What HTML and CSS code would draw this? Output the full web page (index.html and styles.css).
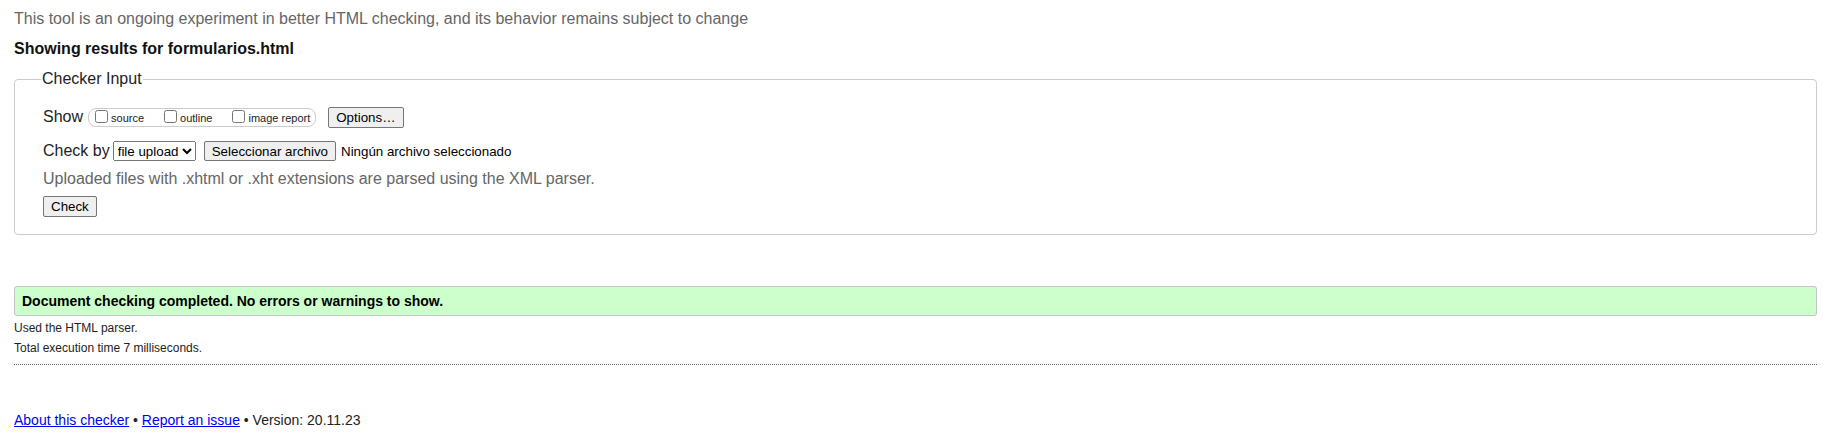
FILE: index.html
```html
<!DOCTYPE html>
<html lang="en">
<head>
<meta charset="utf-8">
<title>Nu Html Checker</title>
<link rel="stylesheet" href="styles.css">
</head>
<body>
<p class="notice">This tool is an ongoing experiment in better HTML checking, and its behavior remains subject to change</p>
<h2 class="results-title">Showing results for formularios.html</h2>
<fieldset class="checker">
  <legend class="checker-legend">Checker Input</legend>
  <div class="checker-body">
    <div class="row">
      <span class="row-label">Show</span>
      <span class="show-group">
        <label class="opt"><input type="checkbox" class="cb"><span class="opt-text">source</span></label>
        <label class="opt"><input type="checkbox" class="cb"><span class="opt-text">outline</span></label>
        <label class="opt opt-last"><input type="checkbox" class="cb"><span class="opt-text">image report</span></label>
      </span>
      <button type="button" class="btn btn-options">Options…</button>
    </div>
    <div class="row row-check">
      <span class="row-label">Check by</span>
      <select class="sel"><option>file upload</option></select>
      <button type="button" class="btn btn-file">Seleccionar archivo</button>
      <span class="file-name">Ningún archivo seleccionado</span>
    </div>
    <p class="hint">Uploaded files with .xhtml or .xht extensions are parsed using the XML parser.</p>
    <div class="row-submit"><button type="button" class="btn">Check</button></div>
  </div>
</fieldset>
<p class="success">Document checking completed. No errors or warnings to show.</p>
<p class="stat stat-first">Used the HTML parser.</p>
<p class="stat">Total execution time 7 milliseconds.</p>
<hr class="divider">
<p class="footer"><a href="#" class="link">About this checker</a> • <a href="#" class="link">Report an issue</a> • Version: 20.11.23</p>
</body>
</html>
```
FILE: styles.css
```css
html, body {
  background: #fff;
}
body {
  margin: 0;
  padding: 0 14px;
  font-family: "Liberation Sans", Arial, sans-serif;
  font-size: 16px;
  color: #222;
}
.notice {
  margin: 10px 0 0;
  line-height: 18px;
  color: #666;
}
.results-title {
  margin: 12px 0 0;
  font-size: 16px;
  line-height: 18px;
  font-weight: bold;
  color: #111;
}
.checker {
  margin: 12px 0 0;
  padding: 18px 24px 17px 26px;
  border: 1px solid #ccc;
  border-radius: 4px;
}
.checker-legend {
  padding: 0 1px;
  line-height: 18px;
  color: #222;
}
.checker-body {
  padding-left: 2px;
}
.row {
  display: flex;
  align-items: center;
  height: 22px;
}
.row-check {
  margin-top: 12px;
}
.row-label {
  line-height: 18px;
}
.show-group {
  display: flex;
  align-items: flex-start;
  box-sizing: border-box;
  height: 19px;
  margin-left: 5px;
  padding: 0 5px 0 2px;
  border: 1px solid #ccc;
  border-radius: 8px;
}
.opt {
  display: flex;
  align-items: flex-start;
  margin-right: 16px;
}
.opt-last {
  margin-right: 0;
}
.cb {
  width: 13px;
  height: 13px;
  margin: 1px 3px 0 4px;
}
.opt-text {
  margin-top: 3px;
  font-size: 11px;
  line-height: 13px;
  color: #222;
}
.btn {
  box-sizing: border-box;
  height: 21px;
  margin: 0;
  padding: 2px 7px;
  font-family: "Liberation Sans", Arial, sans-serif;
  font-size: 13.333px;
  line-height: 15px;
  color: #000;
  background: #efefef;
  border: 1px solid #767676;
  border-radius: 2px;
}
.btn-options {
  margin-left: 12px;
}
.sel {
  margin-left: 3px;
  height: 20px;
  font-family: "Liberation Sans", Arial, sans-serif;
  font-size: 13.333px;
  color: #000;
}
.btn-file {
  margin-left: 8px;
  height: 20px;
}
.file-name {
  margin-left: 5px;
  font-size: 13.333px;
  color: #000;
}
.hint {
  margin: 8px 0 0;
  line-height: 18px;
  color: #666;
}
.row-submit {
  display: flex;
  margin-top: 8px;
}
.success {
  margin: 51px 0 0;
  padding: 6px 7px;
  font-size: 14px;
  line-height: 16px;
  font-weight: bold;
  color: #000;
  background: #ccffcc;
  border: 1px solid #c4c4c4;
  border-radius: 3px;
}
.stat {
  margin: 6px 0 0;
  font-size: 12px;
  line-height: 14px;
  color: #222;
}
.stat-first {
  margin-top: 5px;
}
.divider {
  margin: 9px 0 0;
  height: 0;
  border: 0;
  border-top: 1px dotted #666;
}
.footer {
  margin: 47px 0 0;
  font-size: 14px;
  line-height: 16px;
  color: #222;
}
.link {
  color: #0000ee;
}
```
